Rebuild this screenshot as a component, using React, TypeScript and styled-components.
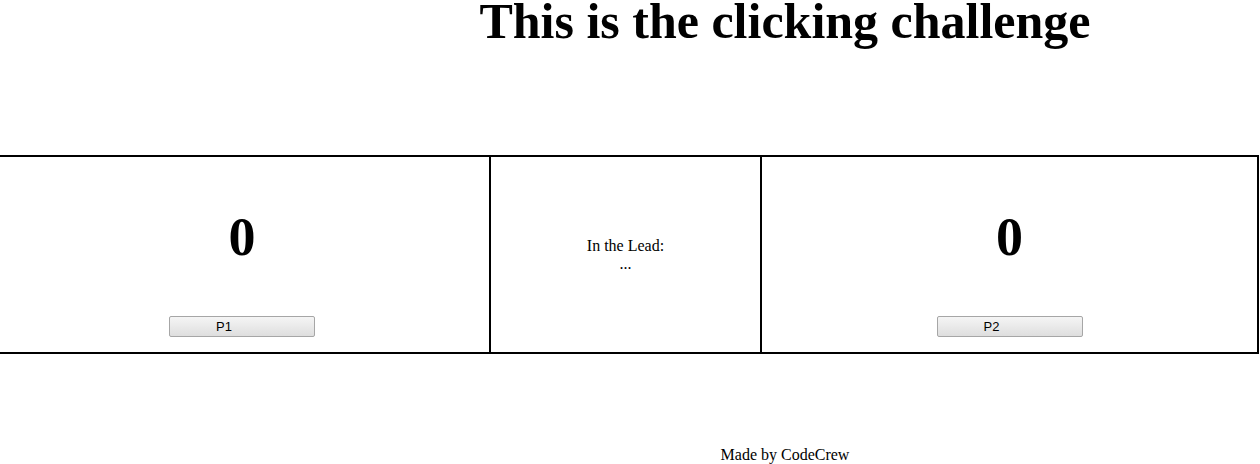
import React from "react";
import styled, { createGlobalStyle } from "styled-components";

const Global = createGlobalStyle`
  html, body { margin: 0; padding: 0; background: #fff; }
  body { font-family: "Liberation Serif", "Times New Roman", serif; color: #000; overflow: hidden; }
`;

const Page = styled.div`
  width: 1260px;
  height: 464px;
  overflow: hidden;
`;

const Header = styled.header`
  padding-left: 310px;
  text-align: center;
`;

const Title = styled.h1`
  margin: 0;
  font-size: 50px;
  line-height: 42px;
  font-weight: bold;
`;

const Board = styled.div`
  display: flex;
  margin: 113px 0 0 -7px;
  width: 1266px;
  box-sizing: border-box;
  border: 2px solid #000;
  height: 199px;
`;

const PlayerCell = styled.div<{ $w: number; $divider?: boolean }>`
  width: ${(p) => p.$w}px;
  flex: none;
  display: flex;
  flex-direction: column;
  align-items: center;
  padding-top: 49px;
  box-sizing: border-box;
  border-left: ${(p) => (p.$divider ? "2px solid #000" : "none")};
`;

const Score = styled.div`
  font-size: 54px;
  line-height: 62px;
  font-weight: bold;
`;

const PlayerButton = styled.button`
  margin-top: 48px;
  width: 146px;
  height: 21px;
  box-sizing: border-box;
  padding: 0 0 0 46px;
  text-align: left;
  font-family: "Liberation Sans", Arial, sans-serif;
  font-size: 13px;
  color: #000;
  border: 1px solid #a6a6a6;
  border-radius: 2px;
  background: linear-gradient(#f5f5f5, #dedede);
`;

const LeadCell = styled.div`
  width: 271px;
  flex: none;
  box-sizing: border-box;
  border-left: 2px solid #000;
  display: flex;
  flex-direction: column;
  align-items: center;
  justify-content: center;
  font-size: 16px;
  line-height: 18px;
  text-align: center;
`;

const Footer = styled.footer`
  margin-top: 92px;
  padding-left: 310px;
  text-align: center;
  font-size: 16px;
  line-height: 18px;
`;

export default function App() {
  return (
    <Page>
      <Global />
      <Header>
        <Title>This is the clicking challenge</Title>
      </Header>
      <Board>
        <PlayerCell $w={494}>
          <Score>0</Score>
          <PlayerButton>P1</PlayerButton>
        </PlayerCell>
        <LeadCell>
          <div>In the Lead:</div>
          <div>...</div>
        </LeadCell>
        <PlayerCell $w={497} $divider>
          <Score>0</Score>
          <PlayerButton>P2</PlayerButton>
        </PlayerCell>
      </Board>
      <Footer>Made by CodeCrew</Footer>
    </Page>
  );
}
